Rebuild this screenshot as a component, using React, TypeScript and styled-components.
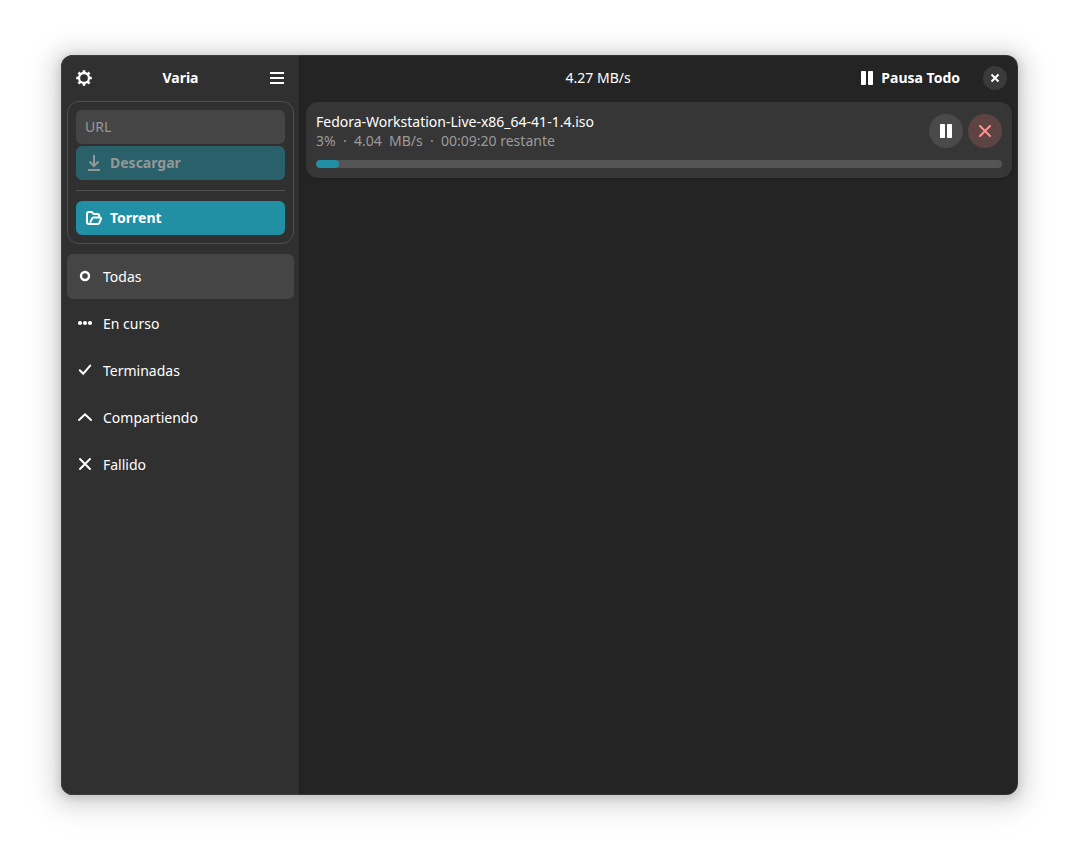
import React from "react";
import styled, { createGlobalStyle, css } from "styled-components";

const GlobalStyle = createGlobalStyle`
  *, *::before, *::after { box-sizing: border-box; }
  body {
    margin: 0;
    background: #ffffff;
    color: #ffffff;
    font-family: "Noto Sans", "Open Sans", sans-serif;
    font-size: 14px;
    line-height: 20px;
  }
  button, input { font: inherit; color: inherit; border: 0; margin: 0; }
  svg { display: block; flex: none; }
`;

const Desktop = styled.div`
  display: flex;
  min-height: 100vh;
  padding: 55px 61px 67px;
`;

const Window = styled.div`
  flex: 1;
  display: grid;
  grid-template-columns: 238px minmax(0, 1fr);
  border-radius: 12px;
  overflow: hidden;
  background: #242424;
  position: relative;
  box-shadow: 0 2px 8px 2px rgba(0, 0, 0, 0.13), 0 3px 20px 10px rgba(0, 0, 0, 0.09),
    0 6px 32px 16px rgba(0, 0, 0, 0.04);

  &::after {
    content: "";
    position: absolute;
    inset: 0;
    border-radius: inherit;
    box-shadow: inset 0 0 0 1px rgba(255, 255, 255, 0.07);
    pointer-events: none;
  }
`;

const Sidebar = styled.aside`
  background: #303030;
  padding: 0 5px 6px 6px;
`;

const Main = styled.main`
  box-shadow: inset 1px 0 0 #202020;
  padding: 0 6px 6px 7px;
`;

const HeaderBar = styled.header`
  display: grid;
  grid-template-columns: 1fr auto 1fr;
  align-items: center;
  height: 46px;
`;

const MainHeader = styled.header`
  display: flex;
  align-items: center;
  height: 46px;
  padding: 0 5px 0 40px;
`;

const Title = styled.h1`
  margin: 0;
  font-size: 14px;
  font-weight: 700;
`;

const Speed = styled.span`
  flex: 1;
  text-align: center;
`;

const HeaderEnd = styled.div`
  display: flex;
  align-items: center;
  gap: 14px;
`;

const FlatButton = styled.button<{ $end?: boolean }>`
  display: flex;
  align-items: center;
  gap: 6px;
  height: 34px;
  padding: 0 9px;
  border-radius: 6px;
  background: transparent;
  font-weight: 700;
  white-space: nowrap;
  justify-self: ${(p) => (p.$end ? "end" : "start")};
`;

const RoundButton = styled.button<{ $size: number; $tone?: "plain" | "danger" | "window" }>`
  display: flex;
  align-items: center;
  justify-content: center;
  flex: none;
  width: ${(p) => p.$size}px;
  height: ${(p) => p.$size}px;
  padding: 0;
  border-radius: 50%;
  background: #4a4a4a;
  ${(p) => p.$tone === "window" && css`background: #3a3a3a;`}
  ${(p) => p.$tone === "danger" && css`background: #5d4442; color: #ff938c;`}
`;

const AddPanel = styled.form`
  display: flex;
  flex-direction: column;
  padding: 8px;
  border: 1px solid #505050;
  border-radius: 12px;
`;

const UrlField = styled.input`
  width: 100%;
  height: 34px;
  padding: 0 9px 2px;
  border-radius: 6px;
  background: #454545;
  &::placeholder { color: #989898; opacity: 1; }
`;

const ActionButton = styled.button`
  display: flex;
  align-items: center;
  gap: 8px;
  height: 34px;
  padding: 0 10px;
  border-radius: 6px;
  background: #2190a4;
  font-weight: 700;
  &:disabled {
    margin-top: 2px;
    background: #296069;
    color: #959797;
  }
`;

const Separator = styled.hr`
  width: 100%;
  height: 1px;
  margin: 10px 0;
  border: 0;
  background: #505050;
`;

const FilterList = styled.nav`
  display: flex;
  flex-direction: column;
  gap: 2px;
  margin-top: 10px;
`;

const FilterButton = styled.button<{ $active?: boolean }>`
  display: flex;
  align-items: center;
  gap: 10px;
  height: 45px;
  padding: 0 10px;
  border-radius: 6px;
  background: ${(p) => (p.$active ? "#454545" : "transparent")};
  svg { margin-bottom: 2px; }
`;

const Card = styled.article`
  display: flex;
  flex-direction: column;
  gap: 10px;
  margin-top: 1px;
  padding: 10px;
  border-radius: 12px;
  background: #363636;
  box-shadow: 0 1px 3px rgba(0, 0, 0, 0.2);
`;

const CardTop = styled.div`
  display: flex;
  align-items: center;
  justify-content: space-between;
  gap: 12px;
`;

const CardText = styled.div`
  min-width: 0;
  line-height: 19px;
`;

const FileName = styled.h2`
  margin: 0;
  font-size: 14px;
  font-weight: 400;
  overflow-wrap: anywhere;
`;

const Status = styled.p`
  margin: 0;
  color: #9b9b9b;
  white-space: pre-wrap;
`;

const CardButtons = styled.div`
  display: flex;
  gap: 5px;
`;

const Track = styled.div`
  height: 8px;
  border-radius: 4px;
  background: #545454;
  overflow: hidden;
`;

const Fill = styled.div`
  height: 100%;
  border-radius: 4px;
  background: #2190a4;
`;

const Icon = ({ children }: { children: React.ReactNode }) => (
  <svg width="16" height="16" viewBox="0 0 16 16" fill="none" stroke="currentColor" strokeWidth="2" aria-hidden="true">
    {children}
  </svg>
);

const teeth = Array.from({ length: 8 }, (_, i) => i * 45);

const GearIcon = () => (
  <Icon>
    <circle cx="8" cy="8" r="5" strokeWidth="2.3" />
    {teeth.map((angle) => (
      <path key={angle} d="M8 0.2V3" strokeWidth="2.6" transform={`rotate(${angle} 8 8)`} />
    ))}
  </Icon>
);
const MenuIcon = () => <Icon><path d="M1 3h14M1 8h14M1 13h14" /></Icon>;
const PauseIcon = () => (
  <Icon>
    <rect x="2" y="1" width="5" height="14" rx="0.7" fill="currentColor" stroke="none" />
    <rect x="9" y="1" width="5" height="14" rx="0.7" fill="currentColor" stroke="none" />
  </Icon>
);
const CloseIcon = () => <Icon><path d="M4.5 4.5l7 7M11.5 4.5l-7 7" /></Icon>;
const CrossIcon = () => <Icon><path d="M3 3l10 10M13 3L3 13" strokeLinecap="round" /></Icon>;
const DownloadIcon = () => <Icon><path d="M8 0v11M3.5 6.500L8 11 12.500 6.500M2 15h12" /></Icon>;
const FolderIcon = () => (
  <Icon>
    <path
      d="M4.500 11.800L6 8.600c.3-.7.700-1 1.500-1H14c.9 0 1.200.5.9 1.300l-1.400 3.700c-.3.900-.9 1.400-1.900 1.400H3c-1.200 0-2-.8-2-2V4c0-1.200.8-2 2-2h2.500c1 0 1 2 2.500 2h3.500c1 0 1.700.7 1.700 1.700v1.800"
      strokeLinejoin="round"
      strokeLinecap="round"
    />
  </Icon>
);
const RingIcon = () => <Icon><circle cx="8" cy="8" r="4" strokeWidth="2.4" /></Icon>;
const DotsIcon = () => (
  <Icon>
    {[3, 8, 13].map((x) => <circle key={x} cx={x} cy="8" r="2.100" fill="currentColor" stroke="none" />)}
  </Icon>
);
const CheckIcon = () => <Icon><path d="M2.800 8.300L6.200 11.700 13.200 3.600" strokeLinecap="round" /></Icon>;
const UpIcon = () => <Icon><path d="M2 11l6-5.700L14 11" strokeLinecap="round" /></Icon>;

const filters = [
  { label: "Todas", icon: <RingIcon />, active: true },
  { label: "En curso", icon: <DotsIcon /> },
  { label: "Terminadas", icon: <CheckIcon /> },
  { label: "Compartiendo", icon: <UpIcon /> },
  { label: "Fallido", icon: <CrossIcon /> },
];

const progress = 3.4;

export default function App() {
  return (
    <Desktop>
      <GlobalStyle />
      <Window>
        <Sidebar>
          <HeaderBar>
            <FlatButton aria-label="Preferencias"><GearIcon /></FlatButton>
            <Title>Varia</Title>
            <FlatButton $end aria-label="Menú"><MenuIcon /></FlatButton>
          </HeaderBar>
          <AddPanel onSubmit={(e) => e.preventDefault()}>
            <UrlField type="text" placeholder="URL" aria-label="URL" />
            <ActionButton type="submit" disabled><DownloadIcon />Descargar</ActionButton>
            <Separator />
            <ActionButton type="button"><FolderIcon />Torrent</ActionButton>
          </AddPanel>
          <FilterList>
            {filters.map((f) => (
              <FilterButton key={f.label} $active={f.active} aria-pressed={!!f.active}>
                {f.icon}
                {f.label}
              </FilterButton>
            ))}
          </FilterList>
        </Sidebar>
        <Main>
          <MainHeader>
            <Speed>4.27 MB/s</Speed>
            <HeaderEnd>
              <FlatButton><PauseIcon />Pausa Todo</FlatButton>
              <RoundButton $size={24} $tone="window" aria-label="Cerrar"><CloseIcon /></RoundButton>
            </HeaderEnd>
          </MainHeader>
          <Card>
            <CardTop>
              <CardText>
                <FileName>Fedora-Workstation-Live-x86_64-41-1.4.iso</FileName>
                <Status>{"3%  ·  4.04  MB/s  ·  00:09:20 restante"}</Status>
              </CardText>
              <CardButtons>
                <RoundButton $size={34} aria-label="Pausar"><PauseIcon /></RoundButton>
                <RoundButton $size={34} $tone="danger" aria-label="Cancelar"><CrossIcon /></RoundButton>
              </CardButtons>
            </CardTop>
            <Track role="progressbar" aria-label="Progreso" aria-valuenow={3} aria-valuemin={0} aria-valuemax={100}>
              <Fill style={{ width: `${progress}%` }} />
            </Track>
          </Card>
        </Main>
      </Window>
    </Desktop>
  );
}
